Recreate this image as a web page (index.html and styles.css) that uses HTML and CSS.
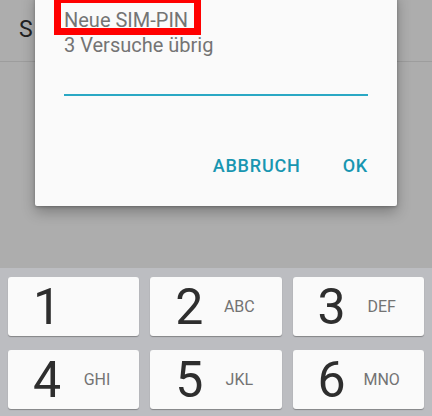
FILE: index.html
```html
<!DOCTYPE html>
<html lang="de">
<head>
  <meta charset="UTF-8" />
  <meta name="viewport" content="width=device-width, initial-scale=1" />
  <title>SIM-PIN ändern</title>
  <link rel="stylesheet" href="styles.css">
</head>
<body>
  <div class="screen">
    <!-- App bar behind the dialog -->
    <header class="appbar">
      <span class="appbar-title">S</span>
    </header>

    <!-- PIN dialog -->
    <div class="dialog" role="dialog">
      <p class="dialog-title">Neue SIM-PIN</p>
      <p class="dialog-sub">3 Versuche übrig</p>
      <div class="field"></div>
      <div class="actions">
        <button class="btn">ABBRUCH</button>
        <button class="btn">OK</button>
      </div>
      <span class="highlight"></span>
    </div>
  </div>

  <!-- Numeric keypad -->
  <div class="keypad">
    <div class="key"><span class="digit">1</span><span class="letters"></span></div>
    <div class="key"><span class="digit">2</span><span class="letters">ABC</span></div>
    <div class="key"><span class="digit">3</span><span class="letters">DEF</span></div>
    <div class="key"><span class="digit">4</span><span class="letters">GHI</span></div>
    <div class="key"><span class="digit">5</span><span class="letters">JKL</span></div>
    <div class="key"><span class="digit">6</span><span class="letters">MNO</span></div>
  </div>
</body>
</html>
```

FILE: styles.css
```css
* {
  margin: 0;
  padding: 0;
  box-sizing: border-box;
  font-family: Roboto, 'Noto Sans', sans-serif;
}

body {
  width: 432px;
  height: 416px;
  overflow: hidden;
  background: #adadad;
}

/* Zone du haut (assombrie par le dialogue) */
.screen {
  position: relative;
  height: 268px;
  background: #adadad;
}

.appbar {
  height: 62px;
  border-bottom: 1px solid #9d9d9d;
  display: flex;
  align-items: center;
  padding-left: 19px;
}

.appbar-title {
  font-size: 23px;
  color: #222;
  margin-top: -3px;
}

/* Dialogue */
.dialog {
  position: absolute;
  left: 35px;
  top: -8px;
  width: 362px;
  height: 214px;
  background: #fafafa;
  border-radius: 2px;
  box-shadow: 0 6px 14px rgba(0,0,0,0.28), 0 1px 3px rgba(0,0,0,0.25);
  padding: 16px 29px 0 29px;
}

.dialog-title,
.dialog-sub {
  font-size: 20px;
  line-height: 25px;
  color: #747474;
}

.field {
  height: 38px;
  border-bottom: 2px solid #2aa8c4;
}

.actions {
  display: flex;
  justify-content: flex-end;
  gap: 42px;
  margin-top: 52px;
}

.btn {
  border: none;
  background: none;
  font-size: 18px;
  font-weight: 500;
  letter-spacing: 0.8px;
  line-height: 36px;
  color: #1896b1;
}

/* Cadre rouge autour du titre */
.highlight {
  position: absolute;
  left: 19px;
  top: 4px;
  width: 147px;
  height: 39px;
  border: 7px solid #ff0000;
}

/* Clavier numérique */
.keypad {
  background: #bcbdc1;
  height: 148px;
  padding: 9px 8px;
  display: grid;
  grid-template-columns: repeat(3, 1fr);
  grid-auto-rows: 59px;
  column-gap: 11px;
  row-gap: 14px;
}

.key {
  background: #fafafa;
  border-radius: 3px;
  box-shadow: 0 1px 1px rgba(0,0,0,0.3);
  display: flex;
  align-items: center;
  padding-left: 19px;
}

.key .digit {
  width: 40px;
  text-align: center;
  font-size: 50px;
  line-height: 1;
  color: #2e2e2e;
}

.key .letters {
  width: 60px;
  text-align: center;
  font-size: 16px;
  color: #737373;
}
```
